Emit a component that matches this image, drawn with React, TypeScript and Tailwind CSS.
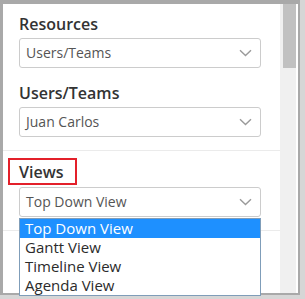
import { useState } from "react";

const font = { fontFamily: '"Open Sans", "Noto Sans", sans-serif' };

function Chevron() {
  return (
    <svg width="13" height="8" viewBox="0 0 13 8" fill="none" className="shrink-0">
      <path d="M1 1.2 L6.5 6.5 L12 1.2" stroke="#9a9a9a" strokeWidth="1.4" />
    </svg>
  );
}

function SelectBox({ value }: { value: string }) {
  return (
    <div className="flex h-[30px] w-[242px] items-center justify-between rounded-[3px] border border-[#cccccc] bg-white pl-[6px] pr-[8px]">
      <span className="text-[14px] leading-none text-[#555555]">{value}</span>
      <Chevron />
    </div>
  );
}

const views = ["Top Down View", "Gantt View", "Timeline View", "Agenda View"];

export default function App() {
  const [active] = useState(0);

  return (
    <div className="h-[299px] w-[305px] bg-[#d6d6d6]" style={font}>
      <div className="flex h-[295px] w-[300px] border-b-2 border-l-[3px] border-r-2 border-t-4 border-[#a9a9a9] bg-white">
        {/* main panel */}
        <div className="flex w-[277px] flex-col">
          <div className="pl-[16px] pt-[9px]">
            <div className="h-[22px] text-[16px] font-semibold leading-[22px] text-[#333333]">Resources</div>
            <div className="mt-[3px]">
              <SelectBox value="Users/Teams" />
            </div>
            <div className="mt-[14px] h-[22px] text-[16px] font-semibold leading-[22px] text-[#333333]">
              Users/Teams
            </div>
            <div className="mt-[3px]">
              <SelectBox value="Juan Carlos" />
            </div>
          </div>
          <div className="mt-[13px] h-px bg-[#ebebeb]" />
          <div className="pl-[16px] pt-[10px]">
            <div className="relative h-[22px] text-[16px] font-semibold leading-[22px] text-[#333333]">
              Views
              <span className="absolute -left-[11px] -top-[3px] h-[27px] w-[69px] border-2 border-[#e3202a]" />
            </div>
            <div className="relative mt-[4px] w-[242px]">
              <SelectBox value="Top Down View" />
              <ul className="absolute left-0 top-full z-10 mt-px w-[242px] border border-[#7f9db9] bg-white">
                {views.map((v, i) => (
                  <li
                    key={v}
                    className={`flex h-[19px] items-center pl-[5px] text-[15px] leading-none ${
                      i === active ? "bg-[#1e90ff] text-white" : "text-[#2b2b2b]"
                    }`}
                  >
                    {v}
                  </li>
                ))}
              </ul>
            </div>
          </div>
          <div className="mt-[13px] h-px bg-[#ebebeb]" />
        </div>
        {/* scrollbar */}
        <div className="w-[16px] bg-[#f0f0f0] pl-[3px]">
          <div className="h-[64px] w-[13px] bg-[#c1c1c1]" />
        </div>
        <div className="w-[2px] bg-white" />
      </div>
    </div>
  );
}
